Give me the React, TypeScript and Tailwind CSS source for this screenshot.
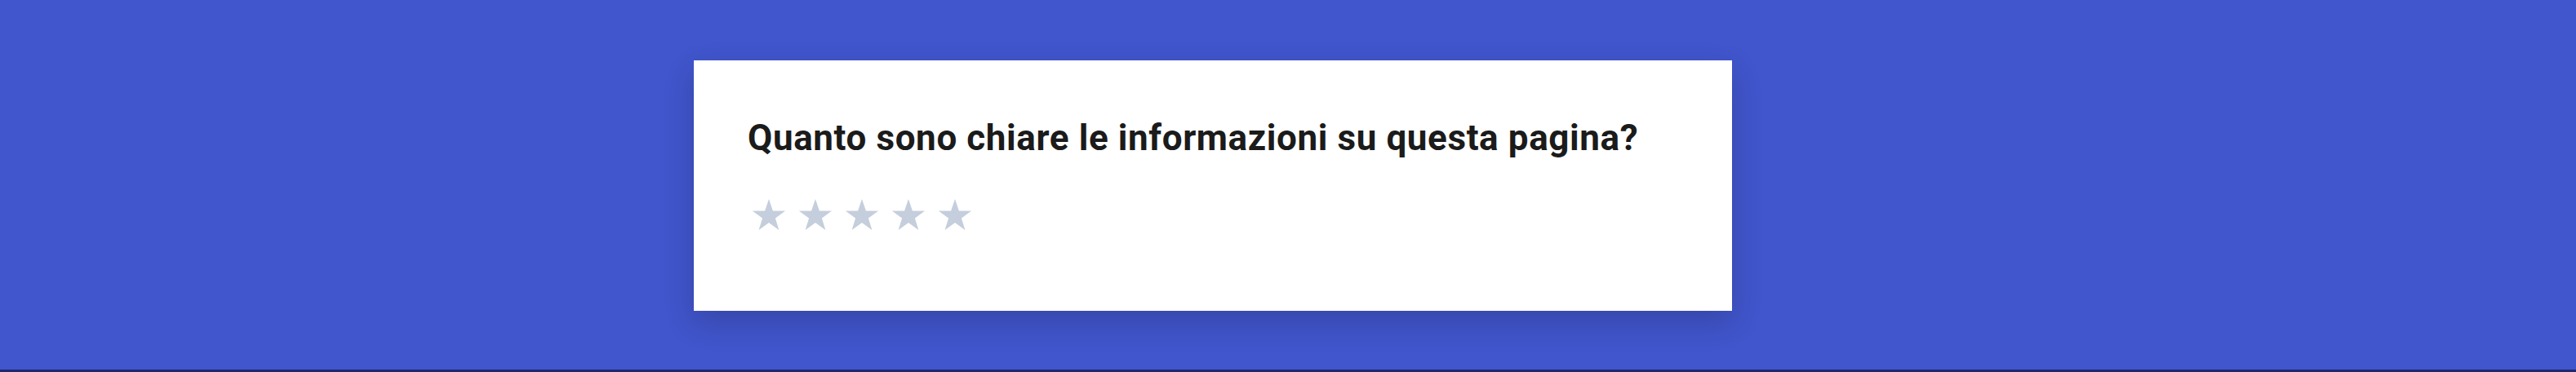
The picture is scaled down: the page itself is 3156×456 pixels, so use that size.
const Star = () => (
  <svg width="42" height="40" viewBox="0 0 42 40" className="shrink-0">
    <polygon
      fill="#c5cedc"
      points="21,0 25.9,14.4 41.1,14.4 28.9,23.4 33.4,37.9 21,29.1 8.6,37.9 13.1,23.4 0.9,14.4 16.1,14.4"
    />
  </svg>
);

export default function App() {
  return (
    <section className="w-full h-[456px] bg-[#4155cc] border-b-[3px] border-[#1f2a6e] pt-[74px]">
      <div className="mx-auto w-[1456px]">
        <div className="w-[1272px] h-[307px] bg-white shadow-[0_14px_34px_rgba(0,0,0,0.18)] pl-[66px] pt-[65px]">
          <h3
            className="text-[44px] leading-[60px] font-bold text-[#1b1b1b] tracking-[0.6px]"
            style={{ fontFamily: 'Roboto, "Liberation Sans", sans-serif' }}
          >
            Quanto sono chiare le informazioni su questa pagina?
          </h3>
          <div className="flex gap-[15px] mt-[45px] ml-[5px]">
            <Star />
            <Star />
            <Star />
            <Star />
            <Star />
          </div>
        </div>
      </div>
    </section>
  );
}
